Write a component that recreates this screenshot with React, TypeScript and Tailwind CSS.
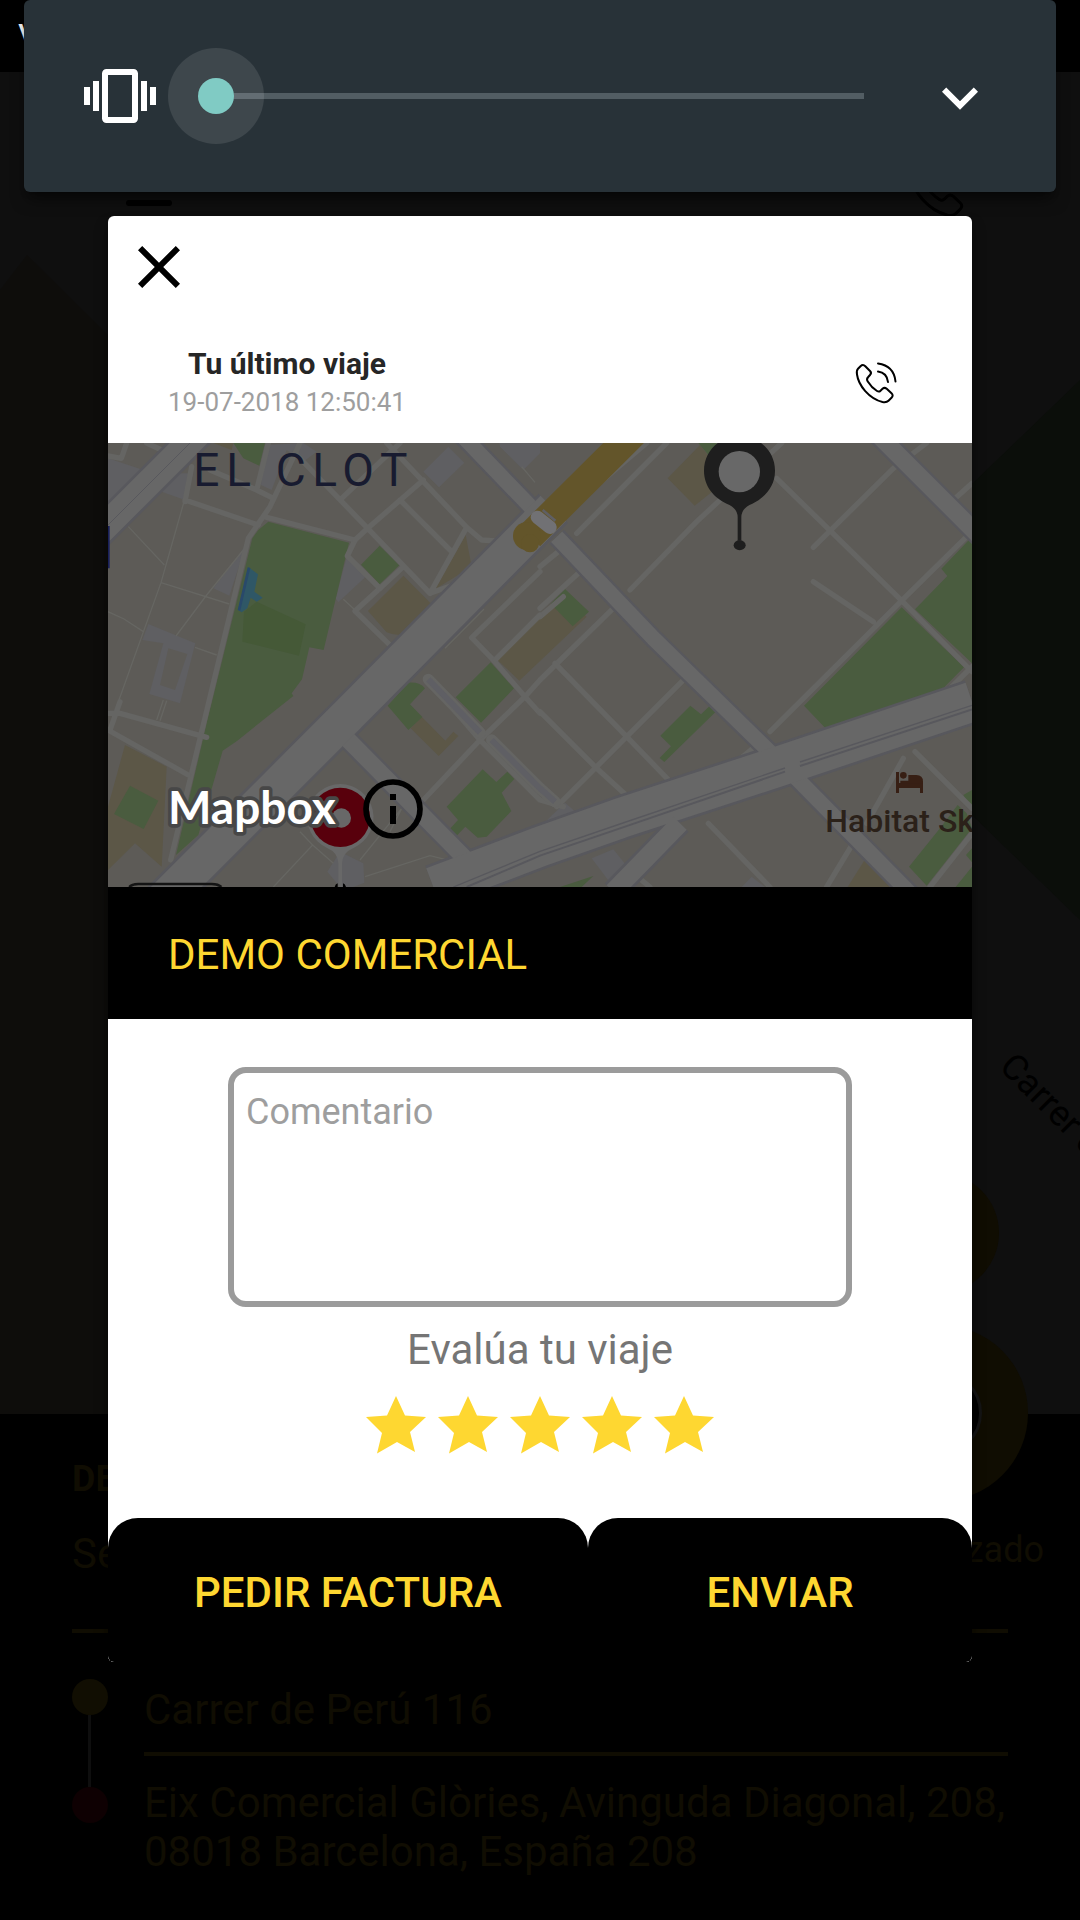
import { useState } from "react";

const ROBOTO = "font-['Roboto','Liberation_Sans',sans-serif]";

function VibrateIcon() {
  return (
    <svg viewBox="0 0 24 24" className="size-[72px] fill-white" aria-hidden="true">
      <path d="M0 15h2V9H0v6zm3 2h2V7H3v10zm19-8v6h2V9h-2zm-3 8h2V7h-2v10zM16.5 3h-9C6.67 3 6 3.67 6 4.5v15c0 .83.67 1.5 1.5 1.5h9c.83 0 1.5-.67 1.5-1.5v-15c0-.83-.67-1.5-1.5-1.5zM16 19H8V5h8v14z" />
    </svg>
  );
}

function PhoneIcon({ className }: { className: string }) {
  return (
    <svg viewBox="0 0 42 42" className={className} fill="none" stroke="currentColor" strokeWidth="2" strokeLinecap="round" strokeLinejoin="round" aria-hidden="true">
      <path d="M5.500 4.200 Q8 1.800 10.300 4.200 L15 9 Q17 11 15 13 L13.200 15 Q11.200 17 12.600 19.200 Q16.500 25.500 22 29 Q24 30.300 25.500 28.700 L27.500 26.800 Q29.500 25 31.700 26.800 L36.500 31.300 Q38.800 33.500 36.500 35.800 L33.500 38.800 Q31.500 40.800 27.500 40 C14 36.500 3.500 23.500 2 12.500 Q1.300 8.500 3 6.800 Z" />
      <path d="M23 9.500 C29 10.200 32.300 14 33 20" />
      <path d="M23 1.500 C33.500 3 39.500 9 40.500 19.500" />
    </svg>
  );
}

function VolumePanel() {
  const [level, setLevel] = useState(0);

  return (
    <section aria-label="Volumen" className="absolute inset-x-6 top-0 flex h-48 items-center rounded-md bg-[#283238] px-[60px] shadow-lg shadow-black/50">
      <button type="button" aria-label="Vibrar">
        <VibrateIcon />
      </button>
      <div className="relative ml-3 h-24 flex-1">
        <div className="absolute inset-x-12 top-[45px] h-1.5 bg-[#525d63]" />
        <div className="relative size-24 rounded-full bg-white/10 p-[30px]">
          <div className="size-9 rounded-full bg-[#80cbc4]" />
        </div>
        <input
          type="range"
          min={0}
          max={7}
          value={level}
          onChange={(e) => setLevel(Number(e.target.value))}
          aria-label="Nivel de volumen"
          className="absolute inset-0 size-full opacity-0"
        />
      </div>
      <button type="button" aria-label="Más opciones" className="ml-3">
        <svg viewBox="0 0 24 24" className="size-[72px] fill-white" aria-hidden="true">
          <path d="M16.590 9.200L12 13.780 7.410 9.200 6 10.610l6 6 6-6z" />
        </svg>
      </button>
    </section>
  );
}

function TripMap() {
  return (
    <div className="h-[444px] overflow-hidden bg-[#5d5b57]">
      <svg viewBox="24 39 2592 1332" preserveAspectRatio="xMidYMid slice" className="size-full" role="img" aria-label="Mapa del viaje">
        <rect x="24" y="39" width="2592" height="1332" fill="#5d5b57" />

        {/* buildings */}
        <g fill="#5f5f62">
          <path d="M24 85 130 120 90 200 24 240ZM240 130 280 130 255 210 185 185ZM495 45 610 39 650 65 610 95 560 60 515 180 483 165ZM970 125 1045 50 1093 98 1017 172ZM1198 39 1320 39 1320 70 1270 120 1200 50Z" />
          <path d="M438 345 388 497 340 475ZM740 382 797 440 715 517 707 505Z" />
          <path fillRule="evenodd" d="M145 582 286 640 240 820 148 792 190 640 127 630ZM205 655 262 672 225 780 180 765Z" />
          <path d="M720 1265 790 1300 793 1358 760 1371H720L682 1325ZM1320 1190 1395 1118 1455 1170 1400 1215 1320 1225ZM1475 1285 1540 1258 1590 1320 1540 1371ZM1925 1371 1955 1340 1995 1371Z" />
        </g>

        {/* sand */}
        <g fill="#5c5747">
          <path d="M340 39H400L395 60ZM910 437 1000 528 915 610Q890 620 860 607L804 543ZM1097 315 1115 410 1005 478Z" />
          <path d="M1186 684 1380 494 1460 560 1258 752ZM965 860 1036 932 1060 905 1075 918 1016 978 932 895ZM1703 145 1800 45 1880 150 1784 227ZM75 945 200 1010 185 1310 105 1240 24 1320V1130Z" />
          <path d="M2300 1280 2400 1371H2243Z" />
        </g>

        {/* parks */}
        <g fill="#4a5c3f">
          <path d="M505 275 747 338 671 660 628 652 606 748 575 790 580 798 412 932 368 962 295 1215 228 1275 320 880 457 325 475 300Z" />
          <path d="M400 39H495L478 107 430 85ZM839 347 898 406 839 463 783 404ZM1172 697 1242 775 1143 878 1067 802ZM925 758Q960 755 975 775L930 823 967 861 925 900 863 827Z" />
          <path d="M1148 1018 1189 1056 1222 1025 1243 1047 1205 1088 1234 1143 1160 1220 1133 1223 1096 1190 1070 1217 1050 1196 1074 1170 1040 1130ZM90 1067 175 1112 131 1197 42 1152Z" />
          <path d="M1395 477 1467 545 1418 589 1352 521ZM1795 39H1850V80L1825 75ZM1771 827 1803 853 1833 824 1855 838 1693 996 1679 984 1713 949 1681 917ZM1925 1005 1970 960 1995 990Z" />
          <path d="M2405 532 2592 712 2485 820 2463 805 2440 840 2198 917 2112 827ZM2616 320V700L2445 538 2542 438 2524 416Z" />
          <path d="M2616 1195 2480 1367 2427 1310 2520 1195 2573 1125 2600 1150ZM2616 1080 2590 1095 2616 1140ZM2616 1255 2598 1275 2616 1297ZM2616 1310V1371H2567ZM1380 1371 1480 1338 1445 1371Z" />
        </g>
        <path d="M470 515 617 583 597 677 427 635 432 545Z" fill="#455937" />
        <path d="M445 411 474 433 463 485 488 503 470 515 452 503 442 535 425 547 414 540Z" fill="#2f5766" />
        <path d="M447 413 417 541" stroke="#29496b" strokeWidth="8" />

        {/* footpaths */}
        <g fill="none" stroke="#666662" strokeWidth="4">
          <path d="M252 215 183 458 55 815M85 290 193 405M183 458 388 522M430 360 320 495 228 618M24 545 72 567 130 605M285 652 350 675M190 810 170 870M200 812 180 872M730 508 765 540M600 1205 638 1245 520 1371M638 1245 700 1300M780 1290 905 1135 870 1205M795 1340 990 1277 1050 1292M1035 655 1152 537M1265 110 1305 157" />
        </g>

        {/* side streets */}
        <g fill="none" stroke="#656563" strokeWidth="16" strokeLinecap="round" strokeLinejoin="round">
          <path d="M80 39 64 85 24 78M140 39 185 60M255 210 475 285M275 110 255 215M330 120 470 180 520 205M505 39 470 180M600 39 510 230 445 325 212 1290M500 262 765 330 742 378 840 475 765 543 880 655" />
          <path d="M590 75 803 295 990 490 1060 465M725 205 900 39M803 295 765 330M803 295 970 150M860 39 1100 292 1145 330 1220 335M1100 292 990 490M900 210 1050 360M910 410 840 475" />
          <path d="M30 900 60 815M60 850 320 922M24 900 265 1035M24 850H60M1320 425 1115 623 1180 690 1275 800 1320 850M1275 800 1140 930 970 1110M1275 800 1320 750 1545 530M1320 560 1390 500M1140 930 985 750M1140 930 1320 1110 1390 1130" />
          <path d="M1320 310 1640 39M1430 310 1700 39M1320 410 1375 365M1320 535 1440 425M1185 690 1320 555M1590 480 1790 275 2045 39M2030 145 2405 512 2616 725M2140 352 2380 115 2480 39M2140 455 2320 575M2010 905 2405 512 2600 320M2560 210 2616 160M2616 710 2520 805" />
          <path d="M1365 700 1580 920 1725 1070M1320 845 1490 1015 1600 1115M1755 745 1370 1130M1880 1020 1965 950M1825 1180 2010 1371M2410 985 2300 1180M2265 1230 2180 1371M2445 965 2616 1135M2616 1210 2490 1371M1600 1330 1650 1371" />
        </g>
        <path d="M985 748 1140 908M1175 930 1320 1075 1365 1115" fill="none" stroke="#656563" strokeWidth="34" strokeLinecap="round" />
        <path d="M985 748 1140 908M1175 930 1320 1075 1365 1115" fill="none" stroke="#5f5f64" strokeWidth="18" />

        {/* avenues: casing below, surface above */}
        <g fill="none" stroke="#58585d" strokeLinejoin="round">
          <path d="M-40 345 300 5" strokeWidth="96" />
          <path d="M1080 10 1330 270M1370 320 1660 625 2080 1035 2450 1410" strokeWidth="60" />
          <path d="M2330 10 2640 320" strokeWidth="66" />
          <path d="M740 925 1110 1300" strokeWidth="64" />
          <path d="M90 1510 720 880 1360 235" strokeWidth="124" />
          <path d="M1000 1371 1320 1250 1560 1165 2040 1008 2616 815" strokeWidth="136" />
          <path d="M1540 1385 1740 1180" strokeWidth="72" />
        </g>
        <g fill="none" stroke="#676767" strokeLinejoin="round">
          <path d="M-40 345 300 5" strokeWidth="80" />
          <path d="M1080 10 1330 270M1370 320 1660 625 2080 1035 2450 1410" strokeWidth="46" />
          <path d="M2330 10 2640 320" strokeWidth="52" />
          <path d="M740 925 1110 1300" strokeWidth="50" />
          <path d="M90 1510 720 880 1360 235" strokeWidth="108" />
          <path d="M1000 1371 1320 1250 1560 1165 2040 1008 2616 815" strokeWidth="120" />
          <path d="M1540 1385 1740 1180" strokeWidth="56" />
        </g>
        <g fill="none" stroke="#58585d">
          <path d="M24 285 270 39" strokeWidth="3" />
          <path d="M1100 1371 1320 1277 1560 1195 2055 1025M2100 1008 2616 838" strokeWidth="6" />
          <path d="M1060 1371 1320 1264 1560 1182 2055 1014M2100 996 2616 826" strokeWidth="4" />
        </g>

        {/* metro line */}
        <path d="M1290 318 1610 0" stroke="#63552a" strokeWidth="86" />
        <circle cx="1281" cy="318" r="42" fill="#63552a" />
        <circle cx="1290" cy="340" r="27" fill="#63552a" />
        <path d="M1312 262 1350 292" stroke="#717174" strokeWidth="40" strokeLinecap="round" />
        <path d="M1328 240 1366 272" stroke="#5f5f64" strokeWidth="8" />
        <path d="M24 288V415" stroke="#19205a" strokeWidth="10" />

        {/* labels */}
        <g className="font-['Roboto','Liberation_Sans',sans-serif]">
          <text x="280" y="168" fontSize="138" letterSpacing="20" fill="#181b30">EL CLOT</text>
          <text x="2176" y="1206" fontSize="96" fontWeight="500" fill="#2b2119">Habitat Sk</text>
        </g>
        <g fill="#371f14">
          <path d="M2388 1026h9v57h63v-9h-63v-15h72v30h-9v-6h-63v6h-9z" />
          <circle cx="2410" cy="1036" r="10" />
          <path d="M2401 1052h24v-17h24q20 0 20 20v6h-68z" />
        </g>

        {/* destination pin */}
        <path d="M1918 18C1860 18 1812 62 1812 122C1812 170 1843 203 1880 221Q1913 234 1913 262V332H1924V262Q1924 234 1957 221C1994 203 2025 170 2025 122C2025 62 1976 18 1918 18Z" fill="#1e1e1e" />
        <circle cx="1918" cy="125" r="62" fill="#686868" />
        <ellipse cx="1919" cy="346" rx="18" ry="15" fill="#1e1e1e" />

        {/* origin pin */}
        <path d="M721 1062A100 100 0 0 0 680 1253Q715 1268 715 1300V1371H726V1300Q726 1268 762 1253A100 100 0 0 0 721 1062Z" fill="#686868" />
        <circle cx="721" cy="1162" r="89" fill="#58000c" />
        <circle cx="724" cy="1164" r="29" fill="#686868" />
        <path d="M704 1371Q706 1362 713 1360V1371ZM738 1371Q736 1362 729 1360V1371Z" fill="#000" />
        <path d="M88 1371Q95 1362 115 1362H335Q355 1362 364 1371" fill="none" stroke="#141414" strokeWidth="8" />

        {/* attribution */}
        <text x="204" y="1182" fontSize="138" fontWeight="700" fill="#fff" stroke="#474747" strokeWidth="22" strokeLinejoin="round" paintOrder="stroke" className="font-['Lato','Open_Sans',sans-serif]">Mapbox</text>
        <circle cx="879" cy="1137" r="81" fill="none" stroke="#000" strokeWidth="17" />
        <path d="M870 1092h18v18h-18zM870 1128h18v54h-18z" fill="#000" />
      </svg>
    </div>
  );
}

function StarRating() {
  const [rating, setRating] = useState(5);

  return (
    <div className="mt-4 flex h-[72px] justify-center" role="group" aria-label="Evalúa tu viaje">
      {[1, 2, 3, 4, 5].map((n) => (
        <button key={n} type="button" aria-label={`${n} estrellas`} aria-pressed={n <= rating} onClick={() => setRating(n)}>
          <svg viewBox="0 0 72 72" className={n <= rating ? "size-[72px] text-[#fed731]" : "size-[72px] text-gray-300"} aria-hidden="true">
            <path fill="currentColor" d="M36 6 45 25.500 66 27 50 42 55 62 37 52 17 63.500 22 43 6 27 27 25.500Z" />
          </svg>
        </button>
      ))}
    </div>
  );
}

function TripDialog() {
  return (
    <div className="absolute inset-x-0 top-0 px-[108px] pt-[216px]">
      <div role="dialog" aria-label="Tu último viaje" className="overflow-hidden rounded-md bg-white shadow-lg shadow-black/60">
        <button type="button" aria-label="Cerrar" className="mt-[15px] ml-[15px] block">
          <svg viewBox="0 0 24 24" className="size-[72px]" aria-hidden="true">
            <path d="M19 6.410L17.590 5 12 10.590 6.410 5 5 6.410 10.590 12 5 17.590 6.410 19 12 13.410 17.590 19 19 17.590 13.410 12z" />
          </svg>
        </button>

        <div className="flex h-[140px] items-center justify-between px-[60px] pt-5">
          <div className="text-center">
            <h1 className="text-[30px] leading-[38px] font-bold text-[#262626]">Tu último viaje</h1>
            <p className="text-[26px] leading-[38px] text-[#9e9e9e]">19-07-2018 12:50:41</p>
          </div>
          <button type="button" aria-label="Llamar" className="mr-[15px]">
            <PhoneIcon className="size-[42px] text-black" />
          </button>
        </div>

        <TripMap />

        <div className="flex h-[132px] items-center bg-black px-[60px] pt-1">
          <h2 className="text-[42px] leading-[48px] text-[#fed731]">DEMO COMERCIAL</h2>
        </div>

        <form className="pt-12" onSubmit={(e) => e.preventDefault()}>
          <div className="px-[120px]">
            <textarea
              aria-label="Comentario"
              placeholder="Comentario"
              className="block h-60 w-full resize-none rounded-[18px] border-6 border-[#9b9b9b] px-3 py-[18px] text-4xl leading-[42px] placeholder:text-[#9e9e9e]"
            />
          </div>
          <p className="mt-[18px] text-center text-[42px] leading-[49px] text-[#757575]">Evalúa tu viaje</p>
          <StarRating />
          <div className="mt-14 flex bg-white text-[42px] font-medium text-[#fed731]">
            <button type="button" className="h-36 flex-5 rounded-t-[30px] bg-black pt-1">PEDIR FACTURA</button>
            <button type="submit" className="h-36 flex-4 rounded-t-[30px] bg-black pt-1">ENVIAR</button>
          </div>
        </form>
      </div>
    </div>
  );
}

function DimmedScreen() {
  return (
    <div className="flex min-h-screen flex-col bg-[#0f0f0f]" aria-hidden="true">
      <div className="h-[72px] bg-black px-[18px] pt-[22px] text-4xl leading-8 text-white">V</div>

      <div className="relative flex-1 overflow-hidden">
        <svg viewBox="0 72 1080 1342" preserveAspectRatio="none" className="absolute inset-0 size-full">
          <path d="M0 290 27 255 108 335V1414H0Z" fill="#0e0d0b" />
          <path d="M1080 380 972 484V815L1080 920Z" fill="#0b0e0a" />
        </svg>
        <div className="absolute top-32 left-[126px] h-1.5 w-[46px] rounded-full bg-black" />
        <PhoneIcon className="absolute top-[86px] right-28 size-[60px] text-black" />
        <svg viewBox="0 0 180 400" className="absolute right-0 bottom-0 h-[400px] w-[180px]">
          <text transform="translate(98 54) rotate(45)" fontSize="36" fill="#000" className="font-['Roboto','Liberation_Sans',sans-serif]">Carrer d</text>
          <circle cx="39" cy="219" r="60" fill="#100d02" />
        </svg>
      </div>

      <div className="relative bg-black px-[72px] pt-11 pb-11 text-[#100d02]">
        <div className="absolute -top-[89px] right-[52px] flex size-44 items-center justify-center rounded-full bg-[#100d02]">
          <div className="size-[84px] rounded-full border-3 border-[#141414] bg-black" />
        </div>
        <p className="text-4xl leading-[42px] font-bold">DEMO</p>
        <div className="-mr-9 mt-[29px] flex items-start justify-between">
          <p className="text-[42px] leading-[49px]">Serv.</p>
          <p className="text-4xl leading-[42px]">Finalizado</p>
        </div>
        <hr className="mt-[51px] border-t-4 border-[#100d02]" />
        <div className="mt-[46px] flex">
          <div className="flex w-[72px] flex-col">
            <span className="size-9 rounded-full bg-[#110e02]" />
            <span className="ml-4 h-[72px] w-[3px] bg-[#0e0e0e]" />
            <span className="size-9 rounded-full bg-[#0e0002]" />
          </div>
          <div className="flex-1 pt-[6px] text-[42px] leading-[49px]">
            <p>Carrer de Perú 116</p>
            <hr className="mt-[18px] mb-[22px] border-t-4 border-[#100d02]" />
            <p>Eix Comercial Glòries, Avinguda Diagonal, 208, 08018 Barcelona, España 208</p>
          </div>
        </div>
      </div>
    </div>
  );
}

export default function App() {
  return (
    <div className={`relative min-h-screen overflow-hidden ${ROBOTO}`}>
      <DimmedScreen />
      <TripDialog />
      <VolumePanel />
    </div>
  );
}
